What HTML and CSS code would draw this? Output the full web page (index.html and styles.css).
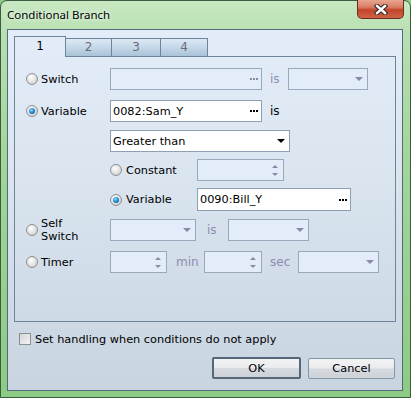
FILE: index.html
```html
<!DOCTYPE html>
<html lang="en">
<head>
    <meta charset="UTF-8">
    <meta name="viewport" content="width=device-width, initial-scale=1.0">
    <title>Conditional Branch</title>
    <link rel="stylesheet" href="styles.css">
</head>

<body>
    <div class="window">
        <div class="titlebar">
            <span class="title">Conditional Branch</span>
            <div class="close">
                <svg width="14" height="11" viewBox="0 0 14 11">
                    <path d="M3 2 L11 9 M11 2 L3 9" stroke="#3a2c2c" stroke-width="4.6" stroke-linecap="square"/>
                    <path d="M3 2 L11 9 M11 2 L3 9" stroke="#fff" stroke-width="2.4" stroke-linecap="square"/>
                </svg>
            </div>
        </div>

        <div class="client">
            <div class="tabs">
                <div class="tab active t1">1</div>
                <div class="tab t2">2</div>
                <div class="tab t3">3</div>
                <div class="tab t4">4</div>
            </div>

            <div class="panel">
                <!-- switch -->
                <div class="row">
                    <div class="lead"><span class="radio"></span><span>Switch</span></div>
                    <div class="field off w152">
                        <svg class="dots" width="8" height="2"><rect x="0" width="2" height="2" fill="#8a88a8"/><rect x="3" width="2" height="2" fill="#8a88a8"/><rect x="6" width="2" height="2" fill="#8a88a8"/></svg>
                    </div>
                    <span class="word off is-a">is</span>
                    <div class="field off w80"><span class="arrow"></span></div>
                </div>

                <!-- variable -->
                <div class="row mt10">
                    <div class="lead"><span class="radio checked"></span><span>Variable</span></div>
                    <div class="field on w152">
                        <span>0082:Sam_Y</span>
                        <svg class="dots" width="8" height="2"><rect x="0" width="2" height="2" fill="#000"/><rect x="3" width="2" height="2" fill="#000"/><rect x="6" width="2" height="2" fill="#000"/></svg>
                    </div>
                    <span class="word is-a">is</span>
                </div>

                <div class="row mt8">
                    <div class="lead"></div>
                    <div class="field on w180">
                        <span>Greater than</span>
                        <span class="arrow dark"></span>
                    </div>
                </div>

                <div class="row mt7">
                    <div class="lead"></div>
                    <div class="sublead"><span class="radio"></span><span>Constant</span></div>
                    <div class="field off w87">
                        <span class="spin"><span class="up"></span><span class="down"></span></span>
                    </div>
                </div>

                <div class="row mt7 tall">
                    <div class="lead"></div>
                    <div class="sublead"><span class="radio checked"></span><span>Variable</span></div>
                    <div class="field on w153">
                        <span>0090:Bill_Y</span>
                        <svg class="dots" width="8" height="2"><rect x="0" width="2" height="2" fill="#000"/><rect x="3" width="2" height="2" fill="#000"/><rect x="6" width="2" height="2" fill="#000"/></svg>
                    </div>
                </div>

                <!-- self switch -->
                <div class="row mt8">
                    <div class="lead"><span class="radio"></span><span class="two">Self<br>Switch</span></div>
                    <div class="field off w86"><span class="arrow"></span></div>
                    <span class="word off is-b">is</span>
                    <div class="field off w81"><span class="arrow"></span></div>
                </div>

                <!-- timer -->
                <div class="row mt10">
                    <div class="lead"><span class="radio"></span><span>Timer</span></div>
                    <div class="field off w57">
                        <span class="spin"><span class="up"></span><span class="down"></span></span>
                    </div>
                    <span class="word off min">min</span>
                    <div class="field off w58">
                        <span class="spin"><span class="up"></span><span class="down"></span></span>
                    </div>
                    <span class="word off sec">sec</span>
                    <div class="field off w81"><span class="arrow"></span></div>
                </div>
            </div>

            <div class="check">
                <span class="box"></span>
                <span>Set handling when conditions do not apply</span>
            </div>

            <div class="buttons">
                <button class="btn ok" type="button">OK</button>
                <button class="btn cancel" type="button">Cancel</button>
            </div>
        </div>
    </div>
</body>
</html>
```

FILE: styles.css
```css
* {
    box-sizing: border-box;
    margin: 0;
    padding: 0;
}

body {
    width: 411px;
    height: 398px;
    overflow: hidden;
    background-color: #8ccb84;
    font-family: "DejaVu Sans", sans-serif;
    font-size: 11.3px;
    color: #000;
}

.window {
    height: 398px;
    padding: 0 7px 6px 6px;
    border: 1px solid #3d5b40;
    border-radius: 7px 7px 0 0;
    background: linear-gradient(180deg, #c8e8c2 0%, #b7dfb0 9%, #a2d69a 40%, #8ccb84 100%);
    display: flex;
    flex-direction: column;
}

.titlebar {
    height: 28px;
    display: flex;
    align-items: flex-start;
}

.title {
    font-family: "Noto Sans", sans-serif;
    font-size: 11.5px;
    line-height: 16px;
    padding-top: 6px;
    text-shadow: 0 0 6px #e8f6e6, 0 0 3px #e8f6e6;
}

.close {
    margin-left: auto;
    margin-right: -1px;
    margin-top: -1px;
    width: 47px;
    height: 19px;
    border: 1px solid #6a2c20;
    border-top: none;
    border-radius: 0 0 5px 5px;
    background: linear-gradient(180deg, #e8a590 0%, #d97e64 40%, #c2442a 55%, #cf6445 100%);
    display: flex;
    align-items: center;
    justify-content: center;
}

.client {
    height: 362px;
    border: 1px solid #56697b;
    background: linear-gradient(180deg, #e3edf9 0%, #dae5f0 40%, #c8d4e0 100%);
    padding: 6px 7px 0 6px;
}

.tabs {
    display: flex;
    align-items: flex-end;
    height: 20px;
}

.tab {
    height: 18px;
    border: 1px solid #6f839b;
    border-bottom: none;
    background: linear-gradient(180deg, #dde9f5 0%, #c4d8e8 50%, #a9c3d7 100%);
    color: #6c6c7c;
    text-align: center;
    line-height: 17px;
    font-size: 12px;
}

.tab.active {
    height: 21px;
    margin-bottom: -1px;
    position: relative;
    z-index: 1;
    background: #e2ecf8;
    color: #000;
    line-height: 19px;
}

.t1 { width: 52px; }
.t2 { width: 47px; margin-left: -1px; }
.t3 { width: 50px; margin-left: -1px; }
.t4 { width: 48px; margin-left: -1px; }

.panel {
    width: 382px;
    height: 266px;
    border: 1px solid #6f839b;
    padding-top: 11px;
}

.row {
    display: flex;
    align-items: center;
    height: 22px;
}

.row.tall { height: 23px; }
.mt7 { margin-top: 7px; }
.mt8 { margin-top: 8px; }
.mt10 { margin-top: 10px; }

.lead {
    width: 95px;
    padding-left: 11px;
    display: flex;
    align-items: center;
    gap: 3px;
}

.sublead {
    width: 87px;
    display: flex;
    align-items: center;
    gap: 4px;
}

.two {
    line-height: 13px;
}

.radio {
    width: 12px;
    height: 12px;
    flex: none;
    border: 1px solid #8d9093;
    border-radius: 50%;
    background: radial-gradient(circle at 40% 35%, #ffffff 0%, #e6e6e6 45%, #c4c4c4 100%);
    position: relative;
}

.radio.checked::after {
    content: "";
    position: absolute;
    left: 2px;
    top: 2px;
    width: 6px;
    height: 6px;
    border-radius: 50%;
    background: radial-gradient(circle at 40% 35%, #8fdcff 0%, #1f8ad0 50%, #0b3f73 100%);
}

.field {
    height: 100%;
    border: 1px solid #8c9fb3;
    display: flex;
    align-items: center;
    padding: 0 3px 0 2px;
}

.field.off {
    background-color: #e3edf9;
    border-color: #97a9bb;
}

.field.on {
    background-color: #fff;
}

.w57 { width: 57px; }
.w58 { width: 58px; }
.w80 { width: 80px; }
.w81 { width: 81px; }
.w86 { width: 86px; }
.w87 { width: 87px; }
.w152 { width: 152px; }
.w153 { width: 154px; }
.w180 { width: 180px; }

.dots {
    margin-left: auto;
}

.arrow {
    margin-left: auto;
    margin-right: 1px;
    width: 0;
    height: 0;
    border-left: 4px solid transparent;
    border-right: 4px solid transparent;
    border-top: 4px solid #8a88a8;
}

.arrow.dark {
    border-top-color: #000;
}

.spin {
    margin-left: auto;
    margin-right: 2px;
    height: 100%;
    display: flex;
    flex-direction: column;
    justify-content: space-between;
    padding: 5px 0 4px;
}

.up, .down {
    width: 0;
    height: 0;
    border-left: 3px solid transparent;
    border-right: 3px solid transparent;
}

.up { border-bottom: 3px solid #8a88a8; }
.down { border-top: 3px solid #8a88a8; }

.word {
    font-size: 12px;
}

.word.off {
    color: #8e8cb0;
}

.is-a { width: 26px; padding-left: 8px; }
.is-b { width: 32px; padding-left: 11px; }
.min { width: 37px; padding-left: 9px; }
.sec { width: 36px; padding-left: 8px; }

.check {
    margin-top: 11px;
    margin-left: 5px;
    display: flex;
    align-items: center;
    gap: 4px;
    height: 12px;
}

.box {
    width: 12px;
    height: 12px;
    border: 1px solid #8d9093;
    background: linear-gradient(135deg, #d6d6d6 0%, #f4f4f4 100%);
}

.buttons {
    margin-top: 12px;
    display: flex;
    justify-content: flex-end;
    align-items: center;
    gap: 7px;
}

.btn {
    font-family: "DejaVu Sans", sans-serif;
    font-size: 11.3px;
    color: #000;
    border: 1px solid #8596a8;
    border-radius: 2px;
    background: linear-gradient(180deg, #f3f3f3 0%, #e9ebee 48%, #d6dae0 52%, #cdd2d8 100%);
}

.ok {
    width: 89px;
    height: 22px;
    border: 2px solid #55677b;
}

.cancel {
    width: 87px;
    height: 21px;
}
```
